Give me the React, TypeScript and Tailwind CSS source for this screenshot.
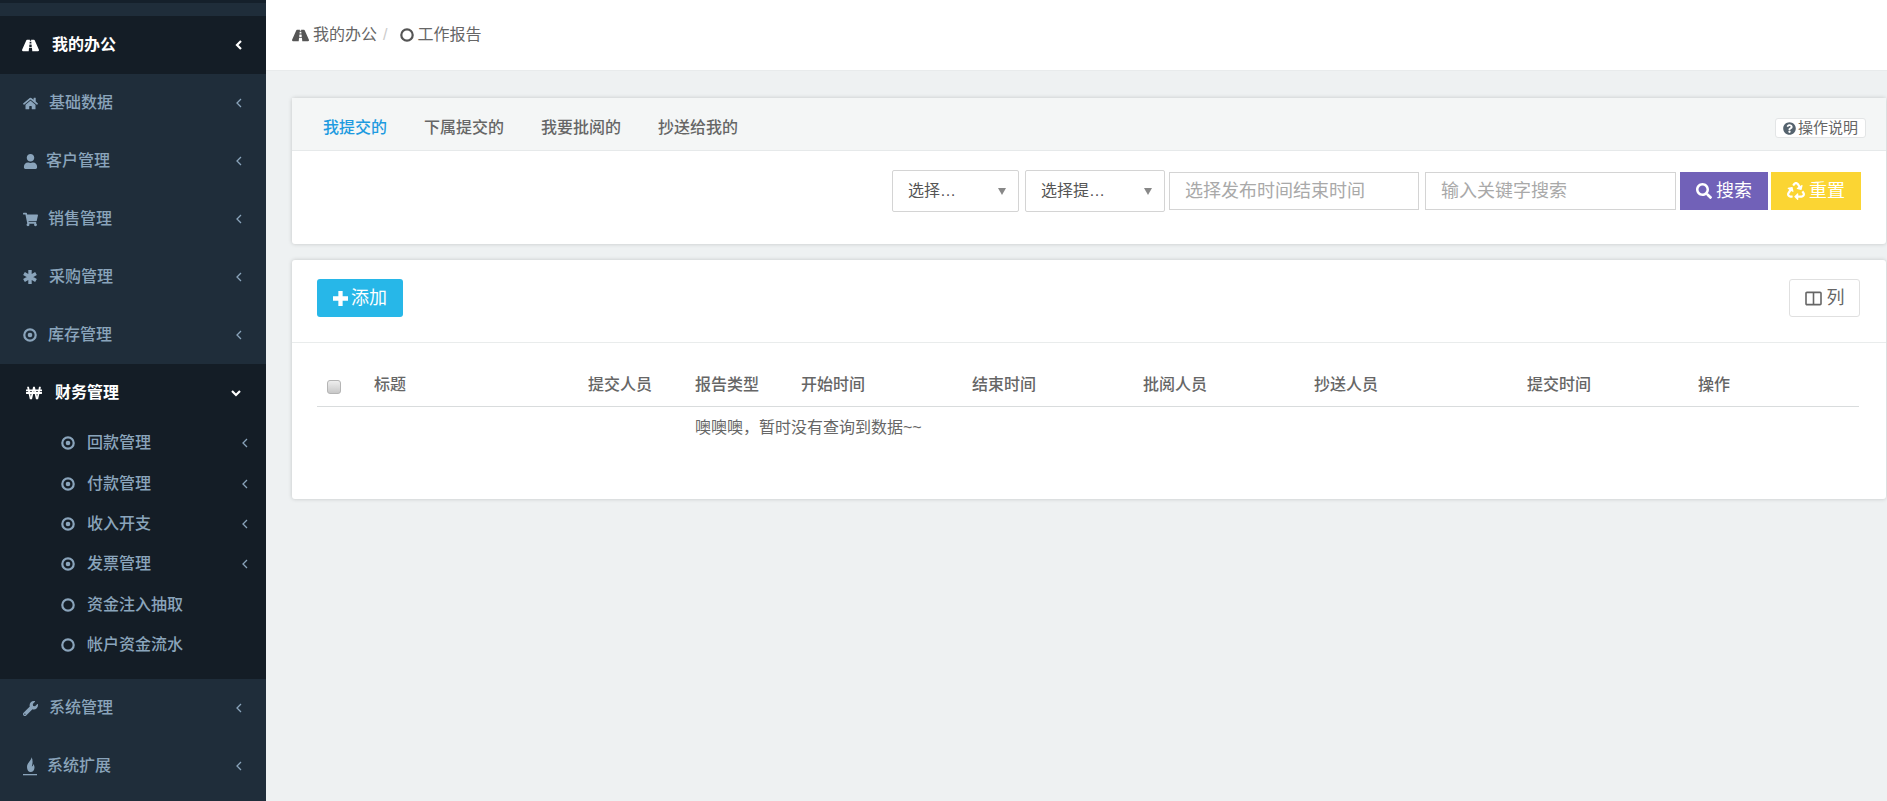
import { ReactNode } from "react";
import {
  FaHome,
  FaQuestionCircle,
  FaRecycle,
  FaRoad,
  FaSearch,
  FaShoppingCart,
  FaUser,
  FaWonSign,
  FaWrench,
} from "react-icons/fa";

const font = "font-['Liberation_Sans','Noto_Sans_CJK_SC',sans-serif]";

const subMenus = [
  { label: "回款管理", dot: true },
  { label: "付款管理", dot: true },
  { label: "收入开支", dot: true },
  { label: "发票管理", dot: true },
  { label: "资金注入抽取", dot: false },
  { label: "帐户资金流水", dot: false },
];

const columns = [
  { title: "标题", width: "w-[214px]" },
  { title: "提交人员", width: "w-[107px]" },
  { title: "报告类型", width: "w-[106px]" },
  { title: "开始时间", width: "w-[171px]" },
  { title: "结束时间", width: "w-[171px]" },
  { title: "批阅人员", width: "w-[171px]" },
  { title: "抄送人员", width: "w-[213px]" },
  { title: "提交时间", width: "w-[171px]" },
  { title: "操作", width: "" },
];

// font-awesome 4 style outlines, the 5 set in react-icons is too thin for these
const Ring = ({ dot }: { dot?: boolean }) => (
  <svg viewBox="0 0 14 14" className="h-[14px] w-[14px] shrink-0" fill="none" stroke="currentColor">
    <circle cx="7" cy="7" r="5.700" strokeWidth="2.200" />
    {dot && <circle cx="7" cy="7" r="2.300" fill="currentColor" stroke="none" />}
  </svg>
);

const Chevron = ({ bold, down }: { bold?: boolean; down?: boolean }) => (
  <svg
    viewBox="0 0 10 10"
    className="ml-auto h-[10px] w-[10px] shrink-0"
    fill="none"
    stroke="currentColor"
    strokeWidth={bold ? 2.200 : 1.300}
  >
    <path d={down ? "M1 3 5 7 9 3" : "M7 1 3 5 7 9"} />
  </svg>
);

const Asterisk = () => (
  <svg viewBox="0 0 14 14" className="h-[14px] w-[14px]" stroke="currentColor" strokeWidth="3.400">
    <path d="M7 0V14M1 3.500 13 10.500M13 3.500 1 10.500" />
  </svg>
);

const Flame = () => (
  <svg viewBox="0 0 14 20" className="h-[20px] w-[14px]" fill="currentColor">
    <path d="M8.500 1C9 4 4 6.500 4 11 4 14 5.500 16 7.500 16 10 16 11.500 14 11.500 11.500 11.500 10 11 9 10.300 8 10.300 9.500 9.500 10.300 8.800 10.500 9.800 7.500 10 4 8.500 1Z" />
    <rect x="0" y="18" width="14" height="1.300" />
  </svg>
);

const PlusIcon = () => (
  <svg viewBox="0 0 14 14" className="h-[15px] w-[15px]" fill="currentColor">
    <path d="M5 0H9V5H14V9H9V14H5V9H0V5H5Z" />
  </svg>
);

const ColumnsIcon = () => (
  <svg viewBox="0 0 18 16" className="h-[15px] w-[17px]" fill="none" stroke="currentColor" strokeWidth="1.700">
    <rect x="1" y="1.500" width="16" height="13" rx="1" />
    <path d="M9 1.500V14.500" />
  </svg>
);

const Caret = () => (
  <svg viewBox="0 0 8 7" className="h-[7px] w-[8px]" fill="#888">
    <path d="M0 0H8L4 7Z" />
  </svg>
);

const MenuItem = ({ icon, label, gap }: { icon: ReactNode; label: string; gap: string }) => (
  <div className="flex h-[58px] items-center pl-[22px] pr-[22px] text-[#8aa4bb]">
    <span className="flex w-[16px] items-center justify-center text-[15px]">{icon}</span>
    <span className={`text-[16px] font-medium ${gap}`}>{label}</span>
    <Chevron />
  </div>
);

const Sidebar = () => (
  <aside className="flex h-[801px] w-[266px] shrink-0 flex-col overflow-hidden bg-[#1f2d3a]">
    <div className="h-[3px] bg-[#15202b]" />
    <div className="h-[13px]" />
    <div className="flex h-[58px] items-center bg-[#141d26] pl-[22px] pr-[22px] text-white">
      <FaRoad className="text-[17px]" />
      <span className="ml-[13px] text-[16px] font-bold">我的办公</span>
      <Chevron bold />
    </div>
    <MenuItem icon={<FaHome />} label="基础数据" gap="ml-[11px]" />
    <MenuItem icon={<FaUser />} label="客户管理" gap="ml-[8px]" />
    <MenuItem icon={<FaShoppingCart />} label="销售管理" gap="ml-[10px]" />
    <MenuItem icon={<Asterisk />} label="采购管理" gap="ml-[11px]" />
    <MenuItem icon={<Ring dot />} label="库存管理" gap="ml-[10px]" />
    <div className="bg-[#141d26] pb-[14px]">
      <div className="flex h-[57px] items-center pl-[26px] pr-[25px] text-white">
        <FaWonSign className="text-[16px]" />
        <span className="ml-[13px] text-[16px] font-bold">财务管理</span>
        <Chevron bold down />
      </div>
      <div className="flex flex-col pt-[2px] text-[#8aa4bb]">
        {subMenus.map((item) => (
          <div key={item.label} className="flex h-[40.400px] items-center pl-[61px] pr-[16px]">
            <Ring dot={item.dot} />
            <span className="ml-[12px] text-[16px] font-medium">{item.label}</span>
            {item.dot && <Chevron />}
          </div>
        ))}
      </div>
    </div>
    <MenuItem icon={<FaWrench />} label="系统管理" gap="ml-[11px]" />
    <MenuItem icon={<Flame />} label="系统扩展" gap="ml-[9px]" />
  </aside>
);

const SelectBox = ({ label, width }: { label: string; width: string }) => (
  <div className={`flex h-[42px] items-center justify-between rounded-[2px] border border-[#d4d4d4] pl-[15px] pr-[12px] text-[16px] text-[#555] ${width}`}>
    <span>{label}</span>
    <Caret />
  </div>
);

const SearchInput = ({ label, width }: { label: string; width: string }) => (
  <div className={`flex h-[38px] items-center border border-[#d4d4d4] pl-[15px] pt-[1px] text-[18px] text-[#a9a9a9] ${width}`}>
    {label}
  </div>
);

const App = () => {
  return (
    <div className={`flex h-[801px] w-[1887px] overflow-hidden bg-[#eef1f2] ${font}`}>
      <Sidebar />
      <main className="min-w-0 flex-1">
        <header className="flex h-[71px] items-center gap-[4px] border-b border-[#e8ebec] bg-white pl-[26px] text-[16px] text-[#666]">
          <FaRoad className="text-[17px] text-[#555]" />
          <span>我的办公</span>
          <span className="ml-[2px] text-[#ccc]">/</span>
          <span className="ml-[9px] text-[#555]">
            <Ring />
          </span>
          <span className="-ml-[1px]">工作报告</span>
        </header>

        <section className="ml-[26px] mr-[1px] mt-[27px] h-[146px] rounded-[3px] bg-white shadow-[0_0_4px_rgba(0,0,0,0.18)]">
          <div className="flex h-[53px] items-center justify-between border-b border-[#e6e9ea] bg-[#f4f6f6] pl-[31px] pr-[20px] pt-[8px]">
            <div className="flex gap-[37px] text-[16px] font-medium text-[#666]">
              <span className="text-[#1e9be0]">我提交的</span>
              <span>下属提交的</span>
              <span>我要批阅的</span>
              <span>抄送给我的</span>
            </div>
            <button className="flex h-[20px] w-[91px] items-center justify-center gap-[2px] rounded-[3px] border border-[#e3e5e6] bg-white text-[15px] text-[#666]">
              <FaQuestionCircle className="text-[13px] text-[#55636e]" />
              操作说明
            </button>
          </div>
          <div className="flex items-center justify-end pr-[25px] pt-[19px]">
            <SelectBox label="选择…" width="w-[127px]" />
            <div className="ml-[6px]">
              <SelectBox label="选择提…" width="w-[140px]" />
            </div>
            <div className="ml-[4px]">
              <SearchInput label="选择发布时间结束时间" width="w-[250px]" />
            </div>
            <div className="ml-[6px]">
              <SearchInput label="输入关键字搜索" width="w-[251px]" />
            </div>
            <button className="ml-[4px] flex h-[38px] w-[88px] items-center justify-center gap-[4px] bg-[#7161b8] text-[18px] text-white">
              <FaSearch className="text-[16px]" />
              搜索
            </button>
            <button className="ml-[3px] flex h-[38px] w-[90px] items-center justify-center gap-[4px] bg-[#fbd533] text-[18px] text-white">
              <FaRecycle className="text-[18px]" />
              重置
            </button>
          </div>
        </section>

        <section className="ml-[26px] mr-[1px] mt-[16px] h-[239px] rounded-[3px] bg-white shadow-[0_0_4px_rgba(0,0,0,0.18)]">
          <div className="flex h-[83px] items-start justify-between border-b border-[#e9ecec] pl-[25px] pr-[26px] pt-[19px]">
            <button className="flex h-[38px] w-[86px] items-center justify-center gap-[3px] rounded-[3px] bg-[#27b7e8] text-[18px] text-white">
              <PlusIcon />
              添加
            </button>
            <button className="flex h-[38px] w-[71px] items-center justify-center gap-[5px] rounded-[3px] border border-[#e0e0e0] bg-white text-[18px] text-[#666]">
              <ColumnsIcon />
              列
            </button>
          </div>
          <div className="px-[25px] pt-[22px]">
            <table className="w-[1542px] table-fixed text-left text-[16px] text-[#666]">
              <thead>
                <tr className="h-[41px] border-b border-[#d9dcdd]">
                  <th className="w-[57px] pl-[10px] pt-[3px] font-normal">
                    <span className="block h-[14px] w-[14px] rounded-[3px] border border-[#b5b5b5] bg-linear-to-b from-[#eeeeee] to-[#c8c8c8]" />
                  </th>
                  {columns.map((col) => (
                    <th key={col.title} className={`font-medium ${col.width}`}>
                      {col.title}
                    </th>
                  ))}
                </tr>
              </thead>
              <tbody>
                <tr>
                  <td colSpan={3} />
                  <td colSpan={7} className="pt-[11px] text-[16px] leading-[20px]">
                    噢噢噢，暂时没有查询到数据~~
                  </td>
                </tr>
              </tbody>
            </table>
          </div>
        </section>
      </main>
    </div>
  );
};

export default App;
